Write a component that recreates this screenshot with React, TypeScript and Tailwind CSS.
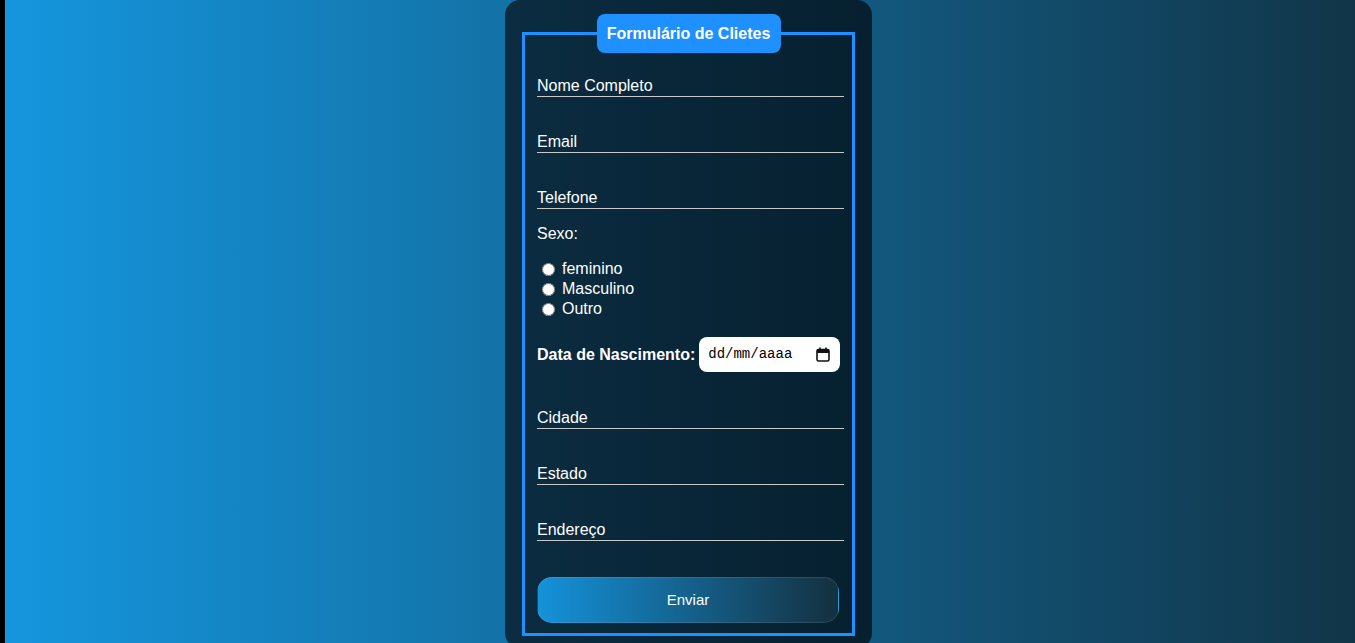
import React from "react";

const campos1 = ["Nome Completo", "Email", "Telefone"];
const campos2 = ["Cidade", "Estado", "Endereço"];

function Campo({ placeholder, className }: { placeholder: string; className?: string }) {
  return (
    <input
      type="text"
      placeholder={placeholder}
      className={`block w-[307px] h-[22px] bg-transparent border-b border-[#c8c8c8] text-white text-[16px] outline-none placeholder:text-white ${className ?? ""}`}
    />
  );
}

export default function App() {
  return (
    <div
      className="flex h-screen overflow-hidden bg-black"
      style={{ fontFamily: '"Liberation Sans", Arial, sans-serif' }}
    >
      <div className="w-[5px] shrink-0 bg-black" />
      <div className="flex-1 bg-[linear-gradient(to_right,#1596de,#113548)]">
        <div className="ml-[500px] w-[367px] h-[648px] rounded-[15px] bg-[linear-gradient(to_right,#0b2c41,#06202f)] px-[17px] pt-[32px]">
          {/* Quadro do formulário */}
          <div className="relative border-[3px] border-[#1e90ff] pl-[12px] pt-[40px] pb-[10px]">
            <div className="absolute top-[-21px] left-1/2 -translate-x-1/2 w-[184px] h-[39px] rounded-[8px] bg-[#1e90ff] text-white font-bold text-[16px] flex items-center justify-center">
              Formulário de Clietes
            </div>

            {campos1.map((c, i) => (
              <Campo key={c} placeholder={c} className={i > 0 ? "mt-[34px]" : ""} />
            ))}

            <p className="mt-[16px] text-white text-[16px] leading-[18px]">Sexo:</p>

            <div className="mt-[16px] flex flex-col text-white text-[16px]">
              {["feminino", "Masculino", "Outro"].map((s) => (
                <label key={s} className="flex items-center h-[20px]">
                  <input type="radio" name="sexo" className="w-[13px] h-[13px] ml-[5px] mr-[7px]" />
                  {s}
                </label>
              ))}
            </div>

            {/* Data de nascimento */}
            <div className="mt-[18px] flex items-center">
              <span className="text-white font-bold text-[16px]">Data de Nascimento:</span>
              <div className="ml-[4px] w-[141px] h-[35px] rounded-[8px] bg-white flex items-center pl-[9px] pr-[10px]">
                <span
                  className="text-[14px] text-black"
                  style={{ fontFamily: '"Liberation Mono", "DejaVu Sans Mono", monospace' }}
                >
                  dd/mm/aaaa
                </span>
                <svg className="ml-auto" width="14" height="15" viewBox="0 0 14 15" fill="none">
                  <rect x="1" y="2.5" width="12" height="11.5" rx="1.5" stroke="#111" strokeWidth="1.6" />
                  <rect x="1" y="2.5" width="12" height="3.5" fill="#111" />
                  <line x1="4" y1="0.5" x2="4" y2="3" stroke="#111" strokeWidth="1.6" />
                  <line x1="10" y1="0.5" x2="10" y2="3" stroke="#111" strokeWidth="1.6" />
                </svg>
              </div>
            </div>

            {campos2.map((c, i) => (
              <Campo key={c} placeholder={c} className={i === 0 ? "mt-[35px]" : "mt-[34px]"} />
            ))}

            <button className="mt-[36px] w-[302px] h-[46px] rounded-[15px] border border-white/10 bg-[linear-gradient(to_right,#1592da,#14303f)] text-white text-[15px]">
              Enviar
            </button>
          </div>
        </div>
      </div>
    </div>
  );
}
